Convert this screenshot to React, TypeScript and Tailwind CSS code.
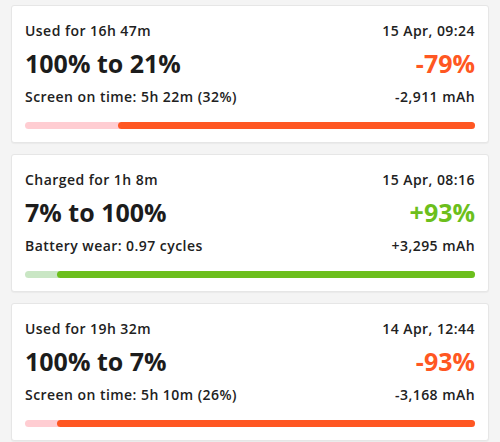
import React from 'react';

interface Session {
    title: string;
    date: string;
    range: string;
    delta: string;
    detail: string;
    mah: string;
    from: number;
    charging: boolean;
}

const sessions: Session[] = [
    { title: 'Used for 16h 47m', date: '15 Apr, 09:24', range: '100% to 21%', delta: '-79%', detail: 'Screen on time: 5h 22m (32%)', mah: '-2,911 mAh', from: 20.7, charging: false },
    { title: 'Charged for 1h 8m', date: '15 Apr, 08:16', range: '7% to 100%', delta: '+93%', detail: 'Battery wear: 0.97 cycles', mah: '+3,295 mAh', from: 7, charging: true },
    { title: 'Used for 19h 32m', date: '14 Apr, 12:44', range: '100% to 7%', delta: '-93%', detail: 'Screen on time: 5h 10m (26%)', mah: '-3,168 mAh', from: 7, charging: false },
];

function SessionCard({ s }: { s: Session }) {
    return (
        <div className="bg-white border border-[#e6e6e6] rounded-[3px] shadow-[0_1px_1px_rgba(0,0,0,0.04)] pt-[15px] pb-[13px] px-[13px]">
            {/* header */}
            <div className="flex justify-between h-5 text-[14px] leading-5 font-semibold tracking-[0.45px] text-[#212121]">
                <span>{s.title}</span>
                <span>{s.date}</span>
            </div>

            {/* percentages */}
            <div className="flex justify-between mt-[6px] text-[25px] leading-[32px] font-bold">
                <span className="text-[#1c1c1c]">{s.range}</span>
                <span className={s.charging ? 'text-[#6cbf1c]' : 'text-[#ff5722]'}>{s.delta}</span>
            </div>

            {/* details */}
            <div className="flex justify-between mt-[8px] text-[14px] leading-5 font-semibold tracking-[0.45px] text-[#212121]">
                <span>{s.detail}</span>
                <span>{s.mah}</span>
            </div>

            {/* level bar */}
            <div className={`relative mt-[15px] h-[7px] rounded-full ${s.charging ? 'bg-[#c9e6c4]' : 'bg-[#ffcdd2]'}`}>
                <div
                    className={`absolute top-0 bottom-0 right-0 rounded-full ${s.charging ? 'bg-[#6cbf1c]' : 'bg-[#ff5722]'}`}
                    style={{ left: `${s.from}%` }}
                />
            </div>
        </div>
    );
}

export default function App() {
    return (
        <div className="w-[500px] h-[442px] bg-[#f4f4f4] px-[11px] pt-[5px] flex flex-col gap-[11px] font-['Open_Sans',sans-serif] overflow-hidden">
            {sessions.map((s) => (
                <SessionCard key={s.date} s={s} />
            ))}
        </div>
    );
}
